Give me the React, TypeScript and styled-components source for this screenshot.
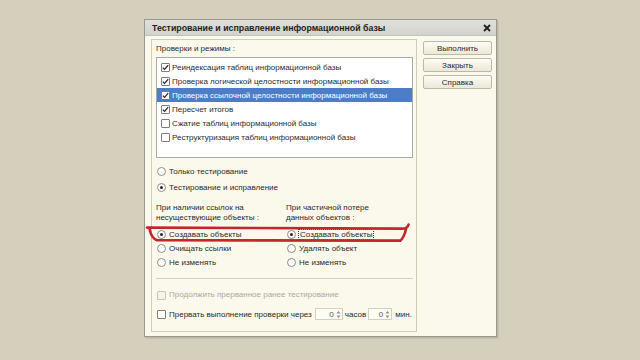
import React from "react";
import styled, { createGlobalStyle } from "styled-components";

const GlobalStyle = createGlobalStyle`
  html, body {
    margin: 0;
    padding: 0;
    background: #d4d0bc;
  }
  body {
    width: 640px;
    height: 360px;
    overflow: hidden;
    font-family: "Liberation Sans", Arial, sans-serif;
    color: #222;
  }
`;

const Stage = styled.div`
  position: relative;
  width: 640px;
  height: 360px;
  padding: 19px 0 0 144px;
  box-sizing: border-box;
`;

const Window = styled.div`
  width: 353px;
  height: 318px;
  box-sizing: border-box;
  border: 1px solid #9a9890;
  background: #fbf8ec;
  display: flex;
  flex-direction: column;
  box-shadow: 1px 1px 0 #b9b6a5, 2px 2px 0 #c6c3b0;
`;

const TitleBar = styled.div`
  height: 15px;
  flex: none;
  display: flex;
  align-items: center;
  justify-content: space-between;
  padding: 0 5px 0 7px;
  background: linear-gradient(#e0e0da, #d3d3cd);
  border-bottom: 1px solid #c4c3bb;
  font-size: 8.8px;
  font-weight: bold;
  color: #1e1e1e;
`;

const Body = styled.div`
  flex: 1;
  display: flex;
  gap: 6px;
  padding: 3px 3px 4px 6px;
`;

const Panel = styled.div`
  width: 266px;
  box-sizing: border-box;
  border: 1px solid #d0ccb7;
  padding: 4px 3px 0 4px;
  display: flex;
  flex-direction: column;
  font-size: 8px;
`;

const Label = styled.div`
  line-height: 10px;
  white-space: nowrap;
  color: ${(p: { $disabled?: boolean }) => (p.$disabled ? "#aca99c" : "#2a2a2a")};
`;

const List = styled.div`
  margin-top: 3px;
  height: 101px;
  box-sizing: border-box;
  border: 1px solid #a9a9a6;
  background: #fff;
  padding: 2px 0 0 0;
`;

const ListRow = styled.div<{ $selected?: boolean }>`
  height: 14px;
  display: flex;
  align-items: center;
  gap: 2px;
  padding-left: 4px;
  background: ${(p) => (p.$selected ? "#4d7dc7" : "transparent")};
  color: ${(p) => (p.$selected ? "#fff" : "#2a2a2a")};
  white-space: nowrap;
`;

const Box = styled.span<{ $disabled?: boolean }>`
  width: 9px;
  height: 9px;
  flex: none;
  box-sizing: border-box;
  border: 1px solid ${(p) => (p.$disabled ? "#c9c6b8" : "#7d7d7a")};
  background: ${(p) => (p.$disabled ? "#f5f3ea" : "#fff")};
  display: flex;
  align-items: center;
  justify-content: center;
  border-radius: 1px;
`;

const Circle = styled.span`
  width: 9px;
  height: 9px;
  flex: none;
  box-sizing: border-box;
  border: 1px solid #8c8c88;
  border-radius: 50%;
  background: #fff;
  display: flex;
  align-items: center;
  justify-content: center;
  &::after {
    content: "";
    width: 3px;
    height: 3px;
    border-radius: 50%;
    background: ${(p: { $on?: boolean }) => (p.$on ? "#252525" : "transparent")};
  }
`;

const Option = styled.div<{ $h?: number }>`
  height: ${(p) => p.$h ?? 14}px;
  display: flex;
  align-items: center;
  gap: 3px;
  padding-left: 1px;
  white-space: nowrap;
  color: #2a2a2a;
`;

const Section = styled.div<{ $top: number }>`
  margin-top: ${(p) => p.$top}px;
  display: flex;
  flex-direction: column;
`;

const Columns = styled.div<{ $top: number }>`
  margin-top: ${(p) => p.$top}px;
  display: grid;
  grid-template-columns: 130px 1fr;
`;

const Focus = styled.span`
  outline: 1px dotted #3a3a3a;
  outline-offset: 0;
  padding: 0 1px;
`;

const Separator = styled.div`
  margin-top: 9px;
  height: 1px;
  background: #d2cebb;
`;

const Spin = styled.div<{ $w: number }>`
  width: ${(p) => p.$w}px;
  height: 12px;
  box-sizing: border-box;
  border: 1px solid #d4d0c0;
  background: #fdfcf6;
  display: flex;
  align-items: center;
  justify-content: flex-end;
  gap: 2px;
  padding-right: 1px;
  color: #555;
`;

const SpinRow = styled.div`
  height: 16px;
  margin-top: 4px;
  display: flex;
  align-items: center;
  padding-left: 1px;
  white-space: nowrap;
  color: #2a2a2a;
`;

const Gap = styled.span<{ $w: number }>`
  margin-left: ${(p) => p.$w}px;
`;

const Buttons = styled.div`
  width: 69px;
  display: flex;
  flex-direction: column;
  gap: 3px;
  padding-top: 2px;
`;

const Button = styled.div`
  height: 14px;
  box-sizing: border-box;
  border: 1px solid #bdb9a5;
  border-radius: 2px;
  background: linear-gradient(#fdfcf6, #ece8d7);
  display: flex;
  align-items: center;
  justify-content: center;
  font-size: 8px;
  color: #2a2a2a;
`;

const Overlay = styled.svg`
  position: absolute;
  left: 0;
  top: 0;
  pointer-events: none;
`;

const Check = () => (
  <svg width="7" height="7" viewBox="0 0 7 7">
    <path d="M0.8 3.6 L2.6 5.4 L6.2 1.2" fill="none" stroke="#262626" strokeWidth="1.3" />
  </svg>
);

const Arrows = () => (
  <svg width="5" height="9" viewBox="0 0 5 9">
    <path d="M0.5 3.5 L2.5 1 L4.5 3.5 Z M0.5 5.5 L2.5 8 L4.5 5.5 Z" fill="#8f8d86" />
  </svg>
);

const checks = [
  { text: "Реиндексация таблиц информационной базы", on: true },
  { text: "Проверка логической целостности информационной базы", on: true },
  { text: "Проверка ссылочной целостности информационной базы", on: true, selected: true },
  { text: "Пересчет итогов", on: true },
  { text: "Сжатие таблиц информационной базы", on: false },
  { text: "Реструктуризация таблиц информационной базы", on: false },
];

const App = () => {
  return (
    <Stage>
      <GlobalStyle />
      <Window>
        <TitleBar>
          <span>Тестирование и исправление информационной базы</span>
          <svg width="8" height="8" viewBox="0 0 8 8">
            <path d="M1 1 L7 7 M7 1 L1 7" stroke="#1e1e1e" strokeWidth="1.8" />
          </svg>
        </TitleBar>
        <Body>
          <Panel>
            <Label>Проверки и режимы :</Label>
            <List>
              {checks.map((c) => (
                <ListRow key={c.text} $selected={c.selected}>
                  <Box>{c.on && <Check />}</Box>
                  <span>{c.text}</span>
                </ListRow>
              ))}
            </List>
            <Section $top={5}>
              <Option $h={16}>
                <Circle />
                Только тестирование
              </Option>
              <Option $h={16}>
                <Circle $on />
                Тестирование и исправление
              </Option>
            </Section>
            <Columns $top={8}>
              <div>
                <Label>При наличии ссылок на</Label>
                <Label>несуществующие объекты :</Label>
              </div>
              <div>
                <Label>При частичной потере</Label>
                <Label>данных объектов :</Label>
              </div>
            </Columns>
            <Columns $top={4}>
              <div>
                <Option>
                  <Circle $on />
                  Создавать объекты
                </Option>
                <Option>
                  <Circle />
                  Очищать ссылки
                </Option>
                <Option>
                  <Circle />
                  Не изменять
                </Option>
              </div>
              <div>
                <Option>
                  <Circle $on />
                  <Focus>Создавать объекты</Focus>
                </Option>
                <Option>
                  <Circle />
                  Удалять объект
                </Option>
                <Option>
                  <Circle />
                  Не изменять
                </Option>
              </div>
            </Columns>
            <Separator />
            <Section $top={9}>
              <Option>
                <Box $disabled />
                <Label $disabled>Продолжить прерванное ранее тестирование</Label>
              </Option>
            </Section>
            <SpinRow>
              <Box />
              <Gap $w={3}>Прервать выполнение проверки через</Gap>
              <Gap $w={3}>
                <Spin $w={28}>
                  0
                  <Arrows />
                </Spin>
              </Gap>
              <Gap $w={2}>часов</Gap>
              <Gap $w={2}>
                <Spin $w={24}>
                  0
                  <Arrows />
                </Spin>
              </Gap>
              <Gap $w={3}>мин.</Gap>
            </SpinRow>
          </Panel>
          <Buttons>
            <Button>Выполнить</Button>
            <Button>Закрыть</Button>
            <Button>Справка</Button>
          </Buttons>
        </Body>
      </Window>
      <Overlay width="640" height="360" viewBox="0 0 640 360">
        <path
          d="M147 227.6 L403 228.6 Q407.5 228.4 408.6 224.5"
          fill="none"
          stroke="#c3262b"
          strokeWidth="2.6"
          strokeLinecap="round"
        />
        <path
          d="M406 229 Q404.5 236.5 400.5 240.6 L157 240.2 Q151.5 238.5 149.5 229"
          fill="none"
          stroke="#c3262b"
          strokeWidth="2.6"
          strokeLinecap="round"
        />
      </Overlay>
    </Stage>
  );
};

export default App;
